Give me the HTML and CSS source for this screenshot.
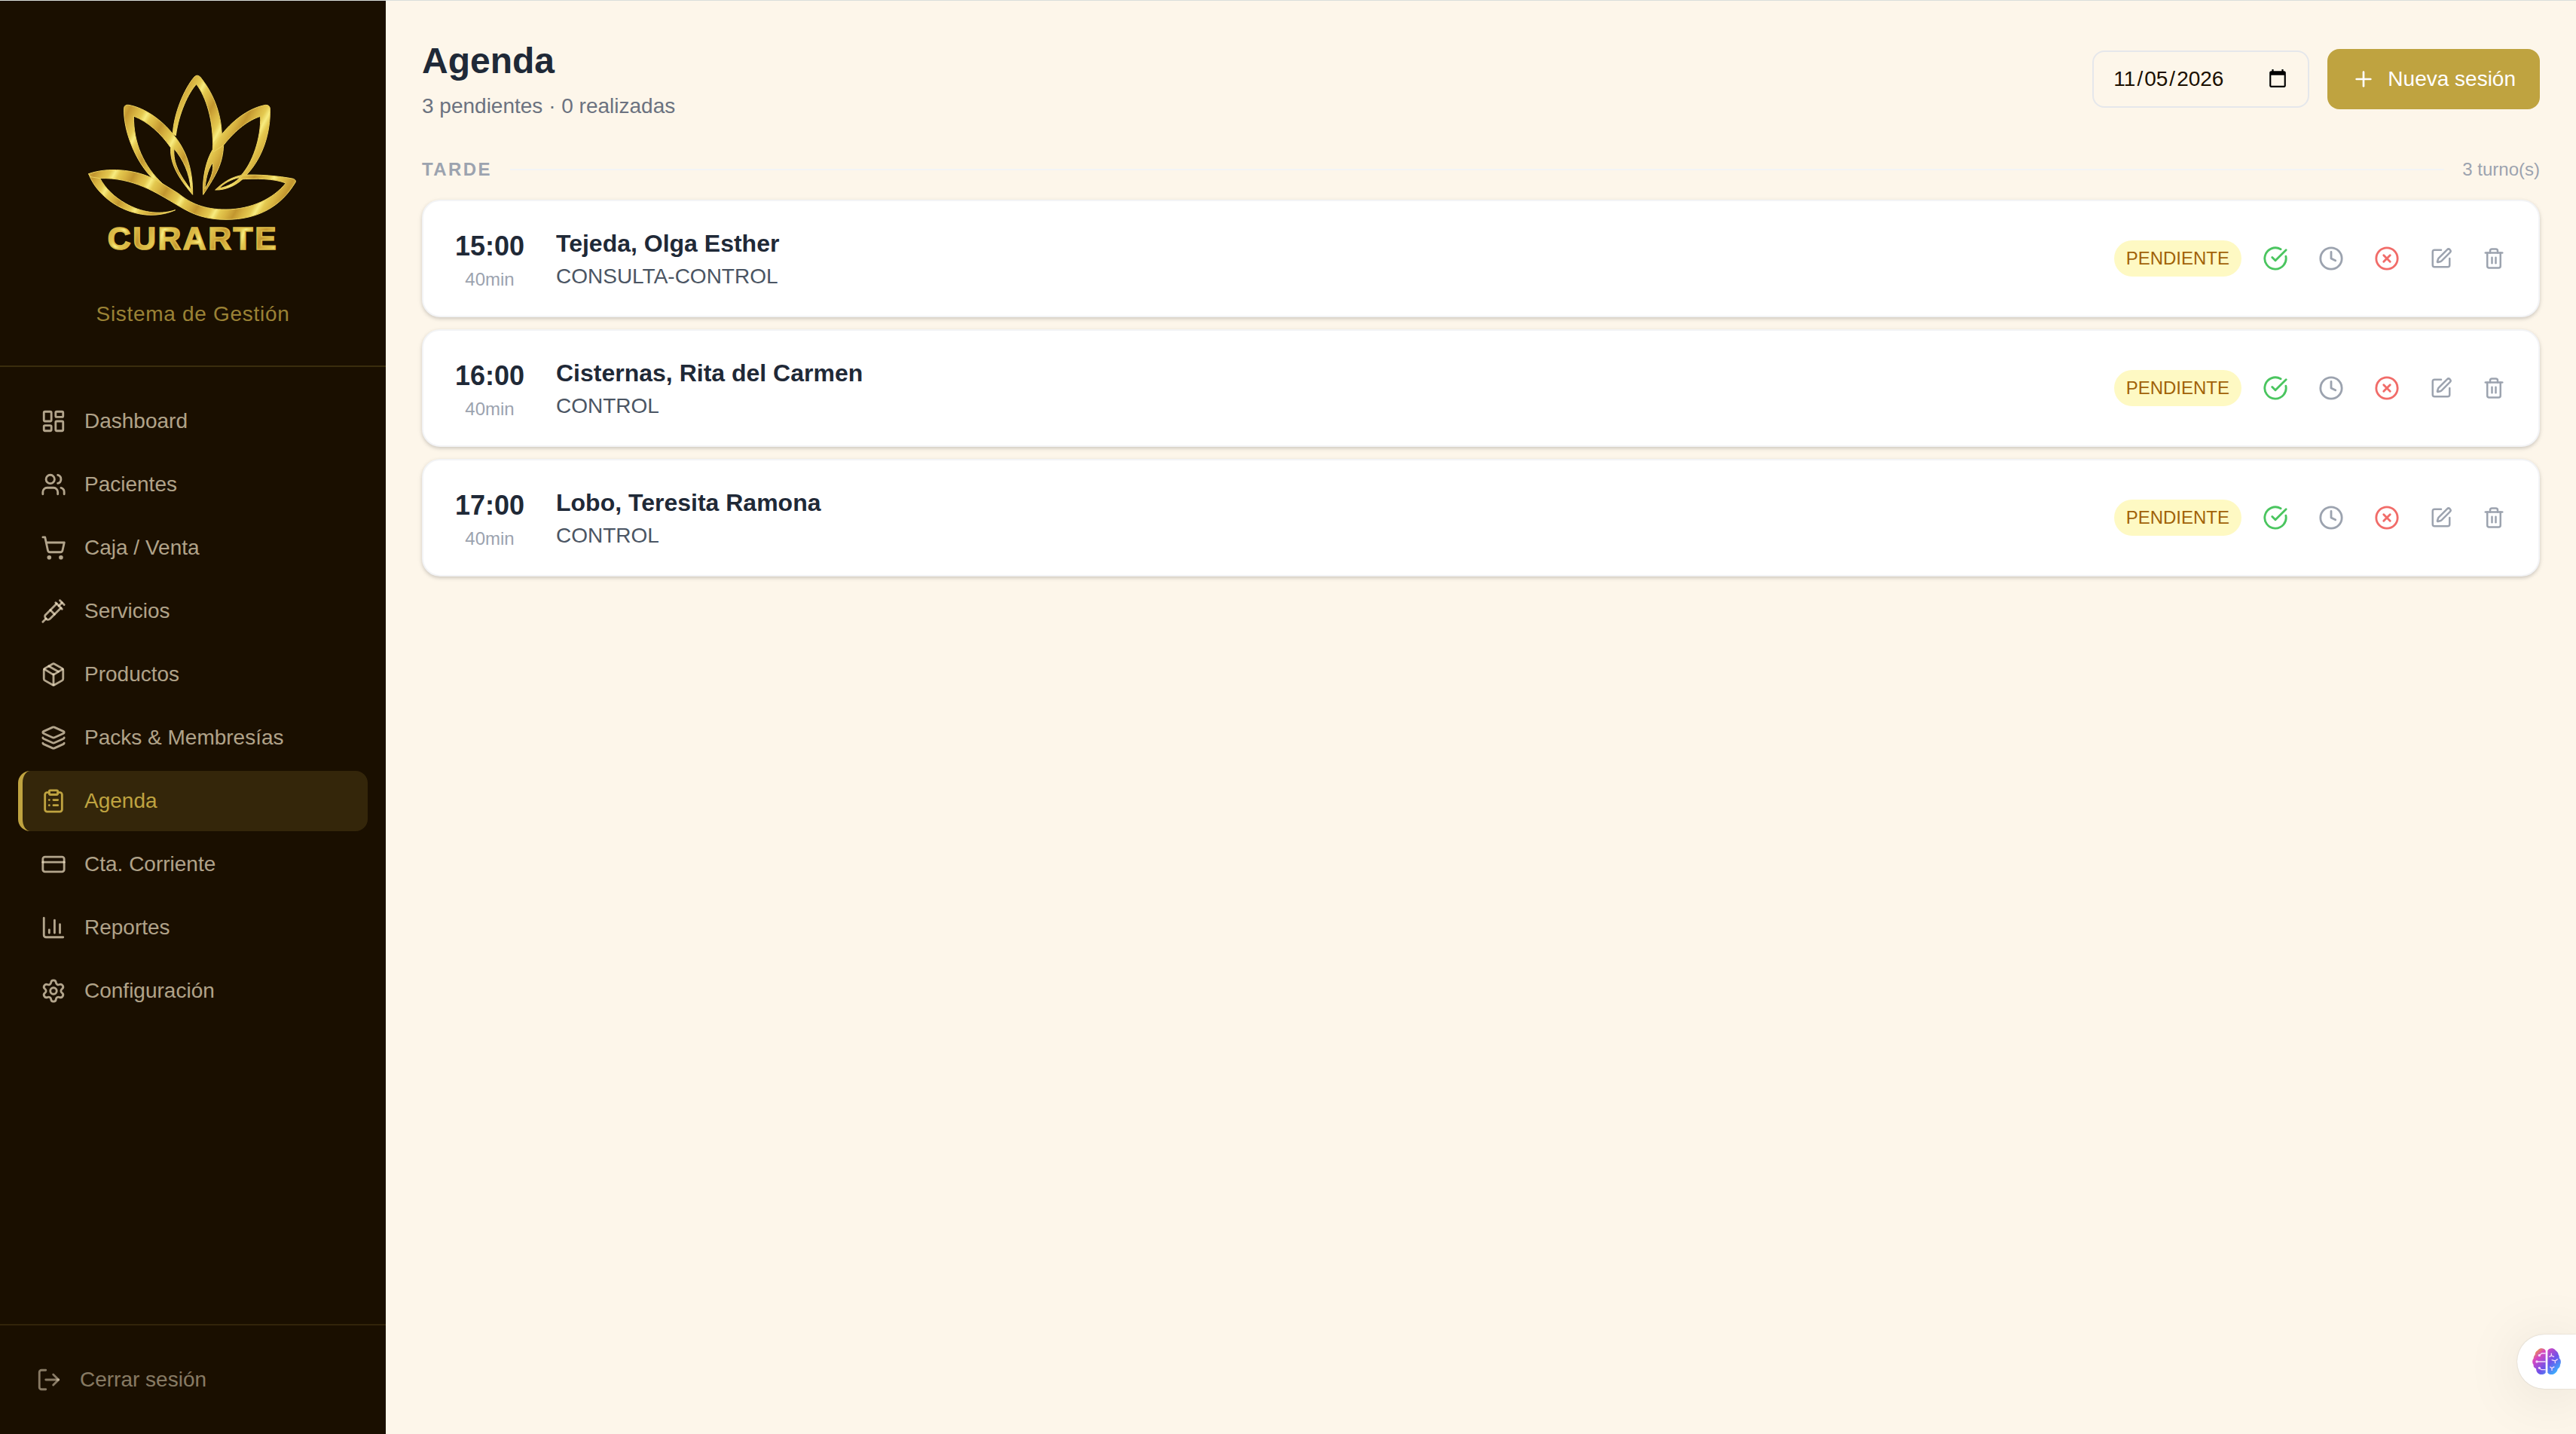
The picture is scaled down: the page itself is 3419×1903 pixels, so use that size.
FILE: index.html
```html
<!DOCTYPE html>
<html lang="es">
<head>
  <meta charset="UTF-8">
  <meta name="viewport" content="width=device-width, initial-scale=1.0">
  <title>Agenda - Curarte</title>
  <link rel="stylesheet" href="styles.css">
</head>
<body>
  <!-- Shared icons -->
  <svg class="sprite" aria-hidden="true">
    <symbol id="i-check" viewBox="0 0 24 24"><path d="M21.801 10A10 10 0 1 1 17 3.335"/><path d="m9 11 3 3L22 4"/></symbol>
    <symbol id="i-clock" viewBox="0 0 24 24"><circle cx="12" cy="12" r="10"/><path d="M12 6v6l4 2"/></symbol>
    <symbol id="i-cancel" viewBox="0 0 24 24"><circle cx="12" cy="12" r="10"/><path d="m15 9-6 6"/><path d="m9 9 6 6"/></symbol>
    <symbol id="i-edit" viewBox="0 0 24 24"><path d="M12 3H5a2 2 0 0 0-2 2v14a2 2 0 0 0 2 2h14a2 2 0 0 0 2-2v-7"/><path d="M18.375 2.625a1 1 0 0 1 3 3l-9.013 9.014a2 2 0 0 1-.853.505l-2.873.84a.5.5 0 0 1-.62-.62l.84-2.873a2 2 0 0 1 .506-.852z"/></symbol>
    <symbol id="i-trash" viewBox="0 0 24 24"><path d="M3 6h18"/><path d="M19 6v14a2 2 0 0 1-2 2H7a2 2 0 0 1-2-2V6"/><path d="M8 6V4a2 2 0 0 1 2-2h4a2 2 0 0 1 2 2v2"/><path d="M10 11v6"/><path d="M14 11v6"/></symbol>
  </svg>

  <div class="layout">
    <!-- Sidebar -->
    <aside class="sidebar">
      <div class="brand">
        <svg class="logo" viewBox="-12 -93 960 900" role="img" aria-label="Curarte">
          <defs>
            <linearGradient id="gold" gradientUnits="userSpaceOnUse" x1="0" y1="0" x2="62" y2="34" spreadMethod="reflect">
              <stop offset="0" stop-color="#c2962f"/>
              <stop offset="0.4" stop-color="#d8b441"/>
              <stop offset="0.75" stop-color="#e4c950"/>
              <stop offset="1" stop-color="#f8ec80"/>
            </linearGradient>
          </defs>
          <g class="petals">
            <!-- center petal -->
            <path d="M388 293C392 215 432 115 474 66Q485 55 497 66C545 125 580 205 583 295L590 340C586 410 565 450 509 535C505 470 520 400 547 355C552 240 520 145 482 95C450 130 412 210 400 300ZM546 408C525 440 518 480 516 512C545 465 552 430 546 408Z"/>
            <!-- right petal -->
            <path d="M583 295C635 230 700 188 758 178Q774 178 775 192C778 290 745 390 680 458C650 495 600 518 557 516C590 485 620 466 660 458C705 410 740 310 737 223C690 238 640 275 590 338L550 365V330ZM655 466C615 475 590 492 572 510C610 502 640 485 655 466Z"/>
            <!-- left petal -->
            <path d="M310 473C240 405 190 280 194 190Q196 176 212 178C280 190 345 240 388 293C440 355 468 430 467 535C425 485 375 420 380 348C340 290 290 245 232 222C232 330 270 420 350 494ZM393 352C388 410 415 455 460 515C455 450 430 395 393 352Z"/>
            <!-- lower left petal -->
            <path d="M53 452C90 550 200 615 300 616C340 616 375 607 398 596C330 618 260 604 200 570C155 545 120 510 98 470Z"/>
            <!-- wave and lower right petal -->
            <path d="M53 452C130 425 230 435 305 468L345 490L410 530C460 570 510 594 600 594C700 594 790 550 838 489C790 470 720 470 650 474L668 457C730 454 810 460 868 472Q881 478 876 486C820 580 730 634 600 634C520 634 470 615 410 579C320 525 230 466 98 470L60 464Z"/>
          </g>
          <text class="logo-name" x="468" y="752" text-anchor="middle">CURARTE</text>
        </svg>
        <p class="tagline">Sistema de Gestión</p>
      </div>

      <nav class="nav">
        <a href="#dashboard" class="nav-item">
          <svg class="icon" viewBox="0 0 24 24"><rect width="7" height="9" x="3" y="3" rx="1"/><rect width="7" height="5" x="14" y="3" rx="1"/><rect width="7" height="9" x="14" y="12" rx="1"/><rect width="7" height="5" x="3" y="16" rx="1"/></svg>
          Dashboard
        </a>
        <a href="#pacientes" class="nav-item">
          <svg class="icon" viewBox="0 0 24 24"><path d="M16 21v-2a4 4 0 0 0-4-4H6a4 4 0 0 0-4 4v2"/><circle cx="9" cy="7" r="4"/><path d="M22 21v-2a4 4 0 0 0-3-3.87"/><path d="M16 3.13a4 4 0 0 1 0 7.75"/></svg>
          Pacientes
        </a>
        <a href="#caja" class="nav-item">
          <svg class="icon" viewBox="0 0 24 24"><circle cx="8" cy="21" r="1"/><circle cx="19" cy="21" r="1"/><path d="M2.05 2.05h2l2.66 12.42a2 2 0 0 0 2 1.58h9.78a2 2 0 0 0 1.95-1.57l1.65-7.43H5.12"/></svg>
          Caja / Venta
        </a>
        <a href="#servicios" class="nav-item">
          <svg class="icon" viewBox="0 0 24 24"><path d="m18 2 4 4"/><path d="m17 7 3-3"/><path d="M19 9 8.7 19.3c-1 1-2.5 1-3.4 0l-.6-.6c-1-1-1-2.5 0-3.4L15 5"/><path d="m9 11 4 4"/><path d="m5 19-3 3"/><path d="m14 4 6 6"/></svg>
          Servicios
        </a>
        <a href="#productos" class="nav-item">
          <svg class="icon" viewBox="0 0 24 24"><path d="M11 21.73a2 2 0 0 0 2 0l7-4A2 2 0 0 0 21 16V8a2 2 0 0 0-1-1.73l-7-4a2 2 0 0 0-2 0l-7 4A2 2 0 0 0 3 8v8a2 2 0 0 0 1 1.73z"/><path d="M12 22V12"/><path d="m3.3 7 7.703 4.734a2 2 0 0 0 1.994 0L20.7 7"/><path d="m7.5 4.27 9 5.15"/></svg>
          Productos
        </a>
        <a href="#packs" class="nav-item">
          <svg class="icon" viewBox="0 0 24 24"><path d="M12.83 2.18a2 2 0 0 0-1.66 0L2.6 6.08a1 1 0 0 0 0 1.83l8.58 3.91a2 2 0 0 0 1.66 0l8.58-3.9a1 1 0 0 0 0-1.83z"/><path d="M2 12a1 1 0 0 0 .58.91l8.6 3.91a2 2 0 0 0 1.65 0l8.58-3.9A1 1 0 0 0 22 12"/><path d="M2 17a1 1 0 0 0 .58.91l8.6 3.91a2 2 0 0 0 1.65 0l8.58-3.9A1 1 0 0 0 22 17"/></svg>
          Packs &amp; Membresías
        </a>
        <a href="#agenda" class="nav-item active" aria-current="page">
          <svg class="icon" viewBox="0 0 24 24"><rect width="8" height="4" x="8" y="2" rx="1"/><path d="M16 4h2a2 2 0 0 1 2 2v14a2 2 0 0 1-2 2H6a2 2 0 0 1-2-2V6a2 2 0 0 1 2-2h2"/><path d="M12 11h4"/><path d="M12 16h4"/><path d="M8 11h.01"/><path d="M8 16h.01"/></svg>
          Agenda
        </a>
        <a href="#cuenta" class="nav-item">
          <svg class="icon" viewBox="0 0 24 24"><rect width="20" height="14" x="2" y="5" rx="2"/><path d="M2 10h20"/></svg>
          Cta. Corriente
        </a>
        <a href="#reportes" class="nav-item">
          <svg class="icon" viewBox="0 0 24 24"><path d="M3 3v16a2 2 0 0 0 2 2h16"/><path d="M18 17V9"/><path d="M13 17V5"/><path d="M8 17v-3"/></svg>
          Reportes
        </a>
        <a href="#configuracion" class="nav-item">
          <svg class="icon" viewBox="0 0 24 24"><path d="M9.671 4.136a2.34 2.34 0 0 1 4.659 0 2.34 2.34 0 0 0 3.319 1.915 2.34 2.34 0 0 1 2.33 4.033 2.34 2.34 0 0 0 0 3.831 2.34 2.34 0 0 1-2.33 4.033 2.34 2.34 0 0 0-3.319 1.915 2.34 2.34 0 0 1-4.659 0 2.34 2.34 0 0 0-3.32-1.915 2.34 2.34 0 0 1-2.33-4.033 2.34 2.34 0 0 0 0-3.831A2.34 2.34 0 0 1 6.35 6.051a2.34 2.34 0 0 0 3.319-1.915"/><circle cx="12" cy="12" r="3"/></svg>
          Configuración
        </a>
      </nav>

      <div class="sidebar-footer">
        <button type="button" class="logout">
          <svg class="icon" viewBox="0 0 24 24"><path d="m16 17 5-5-5-5"/><path d="M21 12H9"/><path d="M9 21H5a2 2 0 0 1-2-2V5a2 2 0 0 1 2-2h4"/></svg>
          Cerrar sesión
        </button>
      </div>
    </aside>

    <!-- Content -->
    <main class="content">
      <header class="page-header">
        <div>
          <h1>Agenda</h1>
          <p class="summary">3 pendientes · 0 realizadas</p>
        </div>
        <div class="toolbar">
          <input type="date" class="date" value="2026-11-05" aria-label="Fecha">
          <button type="button" class="btn-new">
            <svg class="icon" viewBox="0 0 24 24"><path d="M5 12h14"/><path d="M12 5v14"/></svg>
            Nueva sesión
          </button>
        </div>
      </header>

      <section>
        <div class="section-head">
          <h2>TARDE</h2>
          <span class="line"></span>
          <span class="count">3 turno(s)</span>
        </div>

        <div class="sessions">
          <article class="session">
            <div class="time"><strong>15:00</strong><span>40min</span></div>
            <div class="info"><h3>Tejeda, Olga Esther</h3><p>CONSULTA-CONTROL</p></div>
            <div class="actions">
              <span class="badge">PENDIENTE</span>
              <button type="button" class="action ok" aria-label="Realizada"><svg class="icon"><use href="#i-check"/></svg></button>
              <button type="button" class="action" aria-label="Pendiente"><svg class="icon"><use href="#i-clock"/></svg></button>
              <button type="button" class="action cancel" aria-label="Cancelar"><svg class="icon"><use href="#i-cancel"/></svg></button>
              <button type="button" class="action small" aria-label="Editar"><svg class="icon"><use href="#i-edit"/></svg></button>
              <button type="button" class="action small" aria-label="Eliminar"><svg class="icon"><use href="#i-trash"/></svg></button>
            </div>
          </article>
          <article class="session">
            <div class="time"><strong>16:00</strong><span>40min</span></div>
            <div class="info"><h3>Cisternas, Rita del Carmen</h3><p>CONTROL</p></div>
            <div class="actions">
              <span class="badge">PENDIENTE</span>
              <button type="button" class="action ok" aria-label="Realizada"><svg class="icon"><use href="#i-check"/></svg></button>
              <button type="button" class="action" aria-label="Pendiente"><svg class="icon"><use href="#i-clock"/></svg></button>
              <button type="button" class="action cancel" aria-label="Cancelar"><svg class="icon"><use href="#i-cancel"/></svg></button>
              <button type="button" class="action small" aria-label="Editar"><svg class="icon"><use href="#i-edit"/></svg></button>
              <button type="button" class="action small" aria-label="Eliminar"><svg class="icon"><use href="#i-trash"/></svg></button>
            </div>
          </article>
          <article class="session">
            <div class="time"><strong>17:00</strong><span>40min</span></div>
            <div class="info"><h3>Lobo, Teresita Ramona</h3><p>CONTROL</p></div>
            <div class="actions">
              <span class="badge">PENDIENTE</span>
              <button type="button" class="action ok" aria-label="Realizada"><svg class="icon"><use href="#i-check"/></svg></button>
              <button type="button" class="action" aria-label="Pendiente"><svg class="icon"><use href="#i-clock"/></svg></button>
              <button type="button" class="action cancel" aria-label="Cancelar"><svg class="icon"><use href="#i-cancel"/></svg></button>
              <button type="button" class="action small" aria-label="Editar"><svg class="icon"><use href="#i-edit"/></svg></button>
              <button type="button" class="action small" aria-label="Eliminar"><svg class="icon"><use href="#i-trash"/></svg></button>
            </div>
          </article>
        </div>
      </section>
    </main>
  </div>

  <!-- Floating assistant -->
  <button type="button" class="assistant" aria-label="Asistente">
    <svg viewBox="0 0 114 108">
      <defs>
        <linearGradient id="brain" x1="0" y1="0" x2="1" y2="1">
          <stop offset="0.08" stop-color="#e8a040"/>
          <stop offset="0.26" stop-color="#d946c0"/>
          <stop offset="0.58" stop-color="#6d52ea"/>
          <stop offset="0.9" stop-color="#38b6ff"/>
        </linearGradient>
      </defs>
      <path fill="url(#brain)" d="M53 10v88c-6 10-28 10-34-2-3-4-3-8-4-14C5 78 4 72 5 66-1 60-1 48 5 42c0-8 3-13 6-16C12 12 22 10 24 6c8-8 24-6 29 4ZM61 10c5-10 21-12 29-4 3 5 13 8 14 20 3 4 4 8 3 14 8 6 8 18 4 26 0 8-3 12-10 17-1 6-3 10-6 13-8 12-28 12-34 2Z"/>
      <g class="circuit">
        <path d="M53 21H38l-9 7M53 54H20M53 86H36l-7-6M76 20v10l-9 5M76 30l11 5M77 47l14 4 10-7M91 51v10M70 74l8 6 10-6M78 80v10"/>
        <circle cx="28" cy="29" r="3"/><circle cx="18" cy="54" r="3"/><circle cx="28" cy="79" r="3"/>
      </g>
    </svg>
  </button>
</body>
</html>
```

FILE: styles.css
```css
* {
  box-sizing: border-box;
  margin: 0;
  padding: 0;
}
body {
  font-family: "Liberation Sans", Arial, sans-serif;
  font-size: 28px;
  line-height: 40px;
  color: #1a0f00;
  background: #fdf6ea;
  border-top: 1px solid #dadedb;
  min-height: 100vh;
  display: flex;
}
button, input {
  font: inherit;
}
button {
  border: none;
  background: none;
  cursor: pointer;
}
.sprite {
  position: absolute;
  width: 0;
  height: 0;
}
.icon {
  width: 34px;
  height: 34px;
  flex-shrink: 0;
  fill: none;
  stroke: currentColor;
  stroke-width: 2;
  stroke-linecap: round;
  stroke-linejoin: round;
}
.layout {
  display: flex;
  flex: 1;
}

/* Sidebar */
.sidebar {
  width: 512px;
  flex-shrink: 0;
  display: flex;
  flex-direction: column;
  background: #1a0f00;
}
.brand {
  display: flex;
  flex-direction: column;
  align-items: center;
  gap: 48px;
  padding: 48px;
  border-bottom: 2px solid rgba(191, 163, 64, 0.2);
}
.logo {
  width: 320px;
  height: 300px;
}
.petals path {
  fill: url(#gold);
  fill-rule: evenodd;
  stroke: #ecd25f;
  stroke-width: 3;
  stroke-linejoin: round;
}
.logo-name {
  font-size: 128px;
  font-weight: bold;
  letter-spacing: 0.06em;
  fill: url(#gold);
  stroke: #dcba48;
  stroke-width: 5;
}
.tagline {
  color: #9a8235;
  letter-spacing: 0.025em;
}
.nav {
  flex: 1;
  display: flex;
  flex-direction: column;
  gap: 4px;
  padding: 32px 24px;
}
.nav-item {
  display: flex;
  align-items: center;
  gap: 24px;
  padding: 20px 24px;
  border-left: 6px solid transparent;
  border-radius: 16px;
  color: rgba(245, 230, 200, 0.7);
  text-decoration: none;
}
.nav-item.active {
  color: #bfa340;
  background: rgba(191, 163, 64, 0.16);
  border-left-color: #bfa340;
}
.sidebar-footer {
  padding: 32px;
  border-top: 2px solid rgba(191, 163, 64, 0.15);
}
.logout {
  display: flex;
  align-items: center;
  gap: 24px;
  width: 100%;
  padding: 20px 16px;
  color: rgba(245, 230, 200, 0.5);
}

/* Content */
.content {
  flex: 1;
  padding: 48px;
}
.page-header {
  display: flex;
  justify-content: space-between;
  align-items: center;
  margin-bottom: 48px;
}
h1 {
  font-size: 48px;
  line-height: 64px;
  color: #1f2937;
}
.summary {
  margin-top: 8px;
  color: #6b7280;
}
.toolbar {
  display: flex;
  align-items: center;
  gap: 24px;
}
.date {
  width: 288px;
  height: 76px;
  padding: 16px 24px;
  color: #1a0f00;
  background: transparent;
  border: 2px solid #e5e7eb;
  border-radius: 16px;
}
.date::-webkit-datetime-edit-month-field,
.date::-webkit-datetime-edit-day-field,
.date::-webkit-datetime-edit-year-field {
  padding: 0 2px;
}
.btn-new {
  display: flex;
  align-items: center;
  gap: 16px;
  padding: 20px 32px;
  color: #fff;
  background: #bfa340;
  border-radius: 16px;
}
.btn-new .icon {
  width: 32px;
  height: 32px;
}
.section-head {
  display: flex;
  align-items: center;
  gap: 24px;
  margin-bottom: 24px;
  font-size: 24px;
  line-height: 32px;
  color: #9ca3af;
}
.section-head h2 {
  font-size: 24px;
  letter-spacing: 0.1em;
}
.line {
  flex: 1;
  height: 2px;
  background: #f3f4f6;
}
.sessions {
  display: flex;
  flex-direction: column;
  gap: 16px;
}
.session {
  display: flex;
  align-items: center;
  gap: 32px;
  padding: 32px;
  background: #fff;
  border: 2px solid #f3f4f6;
  border-radius: 24px;
  box-shadow: 0 2px 6px rgba(0, 0, 0, 0.1), 0 2px 4px rgba(0, 0, 0, 0.1);
}
.time {
  width: 112px;
  text-align: center;
}
.time strong {
  display: block;
  font-size: 36px;
  line-height: 56px;
  color: #1f2937;
}
.time span {
  display: block;
  font-size: 24px;
  line-height: 32px;
  color: #9ca3af;
}
.info {
  flex: 1;
}
.info h3 {
  font-size: 32px;
  line-height: 48px;
  color: #1f2937;
}
.info p {
  color: #4b5563;
}
.actions {
  display: flex;
  align-items: center;
  gap: 16px;
}
.badge {
  padding: 8px 16px;
  font-size: 24px;
  line-height: 32px;
  color: #a16207;
  background: #fef9c3;
  border-radius: 24px;
}
.action {
  display: flex;
  padding: 12px;
  color: #9ca3af;
}
.action.ok {
  color: #4ac55f;
}
.action.cancel {
  color: #f16c69;
}
.action.small .icon {
  width: 30px;
  height: 30px;
}

/* Assistant tab, pinned to the window edge */
.assistant {
  position: fixed;
  right: 0;
  bottom: 60px;
  display: flex;
  align-items: center;
  height: 72px;
  padding: 0 20px;
  background: #fff;
  border-radius: 36px 0 0 36px;
  box-shadow: 0 0 2px rgba(0, 0, 0, 0.2), 0 8px 80px rgba(0, 0, 0, 0.1);
}
.assistant svg {
  width: 38px;
  height: 36px;
}
.circuit {
  fill: #f3d9fb;
  stroke: #f3d9fb;
  stroke-width: 4;
}
.circuit path {
  fill: none;
}
```
